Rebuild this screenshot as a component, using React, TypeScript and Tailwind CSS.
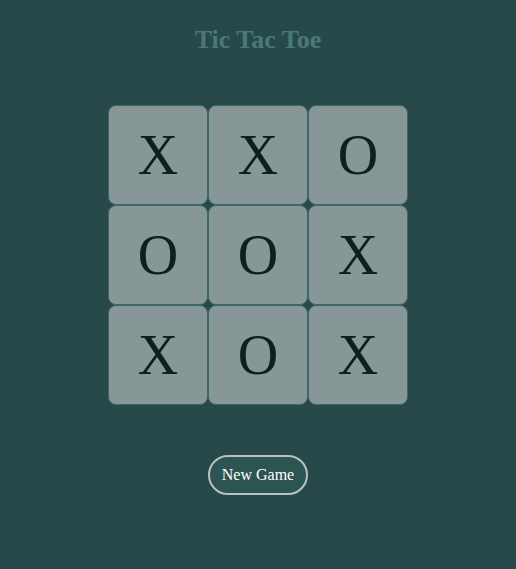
import React, { useState } from "react";

export default function App() {
  const [board, setBoard] = useState<string[]>(["X", "X", "O", "O", "O", "X", "X", "O", "X"]);
  return (
    <div
      className="min-h-screen w-full bg-[#284949] flex flex-col items-center"
      style={{ fontFamily: '"Liberation Serif", "Times New Roman", serif' }}
    >
      <h1 className="mt-[24px] h-[32px] leading-[32px] text-[26px] font-bold text-[#4a7977]">Tic Tac Toe</h1>
      <div className="mt-[49px] grid grid-cols-[100px_100px_100px] grid-rows-[100px_100px_100px]">
        {board.map((v, i) => (
          <div
            key={i}
            className="flex items-center justify-center rounded-[8px] border border-[#3e6866] bg-[#879797] text-[56px] leading-none text-[#0f1f1f]"
          >
            {v}
          </div>
        ))}
      </div>
      <button
        onClick={() => setBoard(Array(9).fill(""))}
        className="mt-[50px] h-[40px] w-[100px] rounded-full border-2 border-[#b8c2c2] bg-[#2c5452] text-[16px] text-white"
      >
        New Game
      </button>
    </div>
  );
}
